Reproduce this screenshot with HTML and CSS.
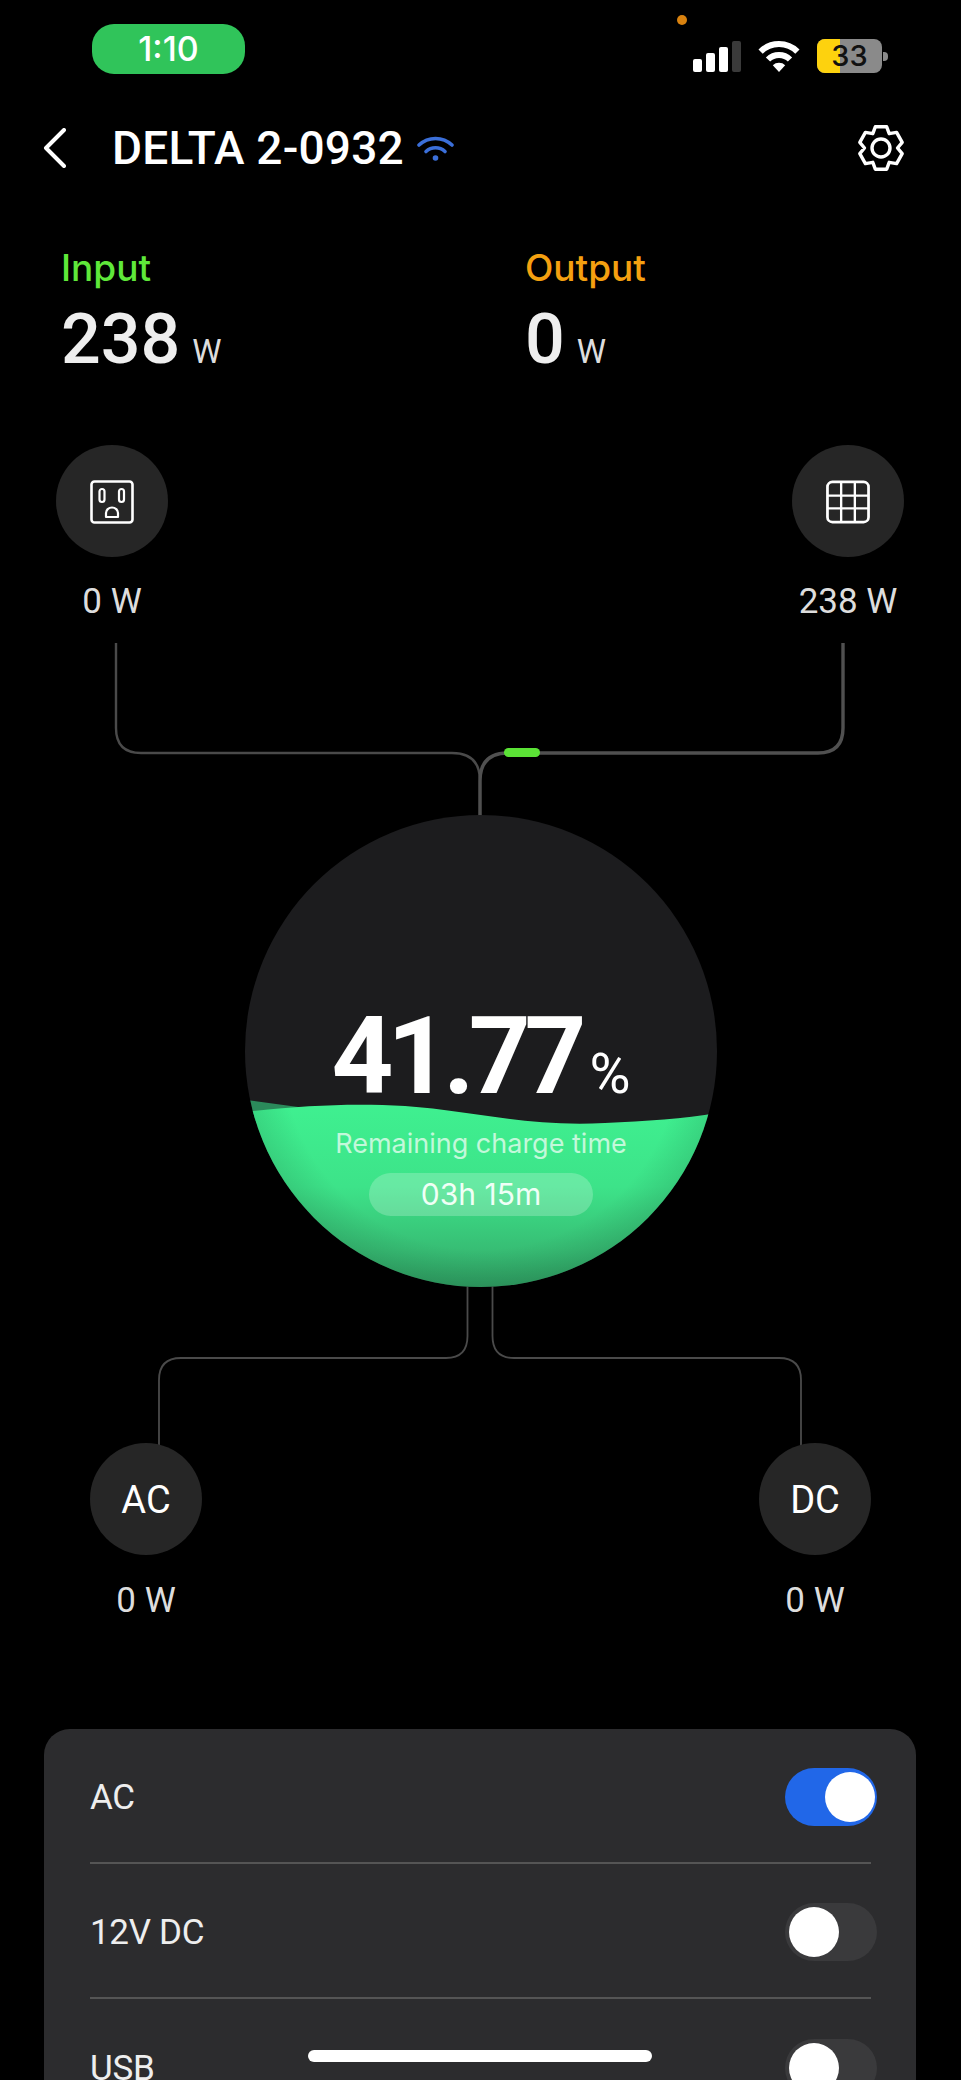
FILE: index.html
```html
<!DOCTYPE html>
<html lang="en">
<head>
  <meta charset="UTF-8">
  <meta name="viewport" content="width=device-width, initial-scale=1.0">
  <title>DELTA 2-0932</title>
  <link rel="stylesheet" href="styles.css">
</head>
<body>
  <div class="status">
    <div class="time-pill">1:10</div>
    <span class="privacy-dot"></span>
    <div class="status-icons">
      <div class="signal">
        <span class="bar bar-1"></span>
        <span class="bar bar-2"></span>
        <span class="bar bar-3"></span>
        <span class="bar bar-4"></span>
      </div>
      <svg class="wifi" viewBox="0 0 44 32">
        <path d="M3.6 11.6A26 26 0 0 1 40.4 11.6" fill="none" stroke="#fff" stroke-width="6"/>
        <path d="M11 19.5A15.5 15.5 0 0 1 33 19.5" fill="none" stroke="#fff" stroke-width="6"/>
        <path d="M22 32L15.8 25.2A9 9 0 0 1 28.2 25.2Z" fill="#fff"/>
      </svg>
      <div class="battery">
        <div class="battery-body"><span class="battery-fill"></span><span class="battery-num">33</span></div>
        <span class="battery-nub"></span>
      </div>
    </div>
  </div>

  <div class="header">
    <svg class="back" viewBox="0 0 23 40">
      <path d="M21 2L3 20L21 38" fill="none" stroke="#fff" stroke-width="4" stroke-linecap="round" stroke-linejoin="round"/>
    </svg>
    <h1>DELTA 2-0932</h1>
    <svg class="link-wifi" viewBox="0 0 37 25">
      <path d="M2 9A24 24 0 0 1 35 9" fill="none" stroke="#3b6fd9" stroke-width="3.6" stroke-linecap="round"/>
      <path d="M9 15.5A14 14 0 0 1 28 15.5" fill="none" stroke="#3b6fd9" stroke-width="3.6" stroke-linecap="round"/>
      <circle cx="18.5" cy="22" r="2.8" fill="#3b6fd9"/>
    </svg>
    <svg class="gear" viewBox="0 0 48 48">
      <path d="M18.3 2.8L29.7 2.8L32.2 9.7L39.6 8.4L45.2 18.3L40.5 24L45.2 29.7L39.6 39.6L32.2 38.3L29.7 45.2L18.3 45.2L15.8 38.3L8.4 39.6L2.8 29.7L7.5 24L2.8 18.3L8.4 8.4L15.8 9.7Z" fill="none" stroke="#fff" stroke-width="3.4" stroke-linejoin="round"/>
      <circle cx="24" cy="24" r="9" fill="none" stroke="#fff" stroke-width="3.4"/>
    </svg>
  </div>

  <div class="stats">
    <div class="stat">
      <div class="stat-label input">Input</div>
      <div class="stat-value">238<span class="unit">W</span></div>
    </div>
    <div class="stat">
      <div class="stat-label output">Output</div>
      <div class="stat-value">0<span class="unit">W</span></div>
    </div>
  </div>

  <div class="diagram">
    <svg class="wires" viewBox="0 0 961 1289">
      <path class="wire" d="M116 203V288Q116 313 141 313H452Q480 313 480 341V376"/>
      <path class="wire wire-thick" d="M843 203V288Q843 313 818 313H508Q480 313 480 341V376"/>
      <rect x="504" y="308" width="36" height="9" rx="4.5" fill="#5be336"/>
      <path class="wire wire-thin" d="M467.5 846V896Q467.5 918 446 918H181Q159 918 159 940V1010"/>
      <path class="wire wire-thin" d="M492.5 846V896Q492.5 918 514 918H779Q801 918 801 940V1010"/>
    </svg>

    <div class="node node-outlet">
      <svg class="node-icon" viewBox="0 0 44 44">
        <rect x="1.5" y="1.5" width="41" height="41" rx="3" fill="none" stroke="#fff" stroke-width="2.6"/>
        <rect x="9.5" y="9" width="5" height="13" rx="2.5" fill="none" stroke="#fff" stroke-width="2.2"/>
        <rect x="29" y="9" width="5" height="13" rx="2.5" fill="none" stroke="#fff" stroke-width="2.2"/>
        <path d="M16 37V33A6 5.5 0 0 1 28 33V37Z" fill="none" stroke="#fff" stroke-width="2.2" stroke-linejoin="round"/>
      </svg>
    </div>
    <div class="node-label label-outlet">0 W</div>

    <div class="node node-solar">
      <svg class="node-icon" viewBox="0 0 45 44">
        <rect x="1.5" y="1.5" width="42" height="41" rx="5" fill="none" stroke="#fff" stroke-width="2.8"/>
        <path d="M15.5 2V42M29.5 2V42M2 15.5H43M2 28.5H43" fill="none" stroke="#fff" stroke-width="2.4"/>
      </svg>
    </div>
    <div class="node-label label-solar">238 W</div>

    <div class="battery-ball">
      <svg class="water" viewBox="0 0 472 472">
        <defs>
          <linearGradient id="water-fade" x1="0" y1="0" x2="0" y2="1">
            <stop offset="0" stop-color="#3ff090"/>
            <stop offset="0.45" stop-color="#3de389"/>
            <stop offset="0.8" stop-color="#37bd74"/>
            <stop offset="1" stop-color="#2fa063"/>
          </linearGradient>
          <radialGradient id="water-edge" cx="236" cy="236" r="236" gradientUnits="userSpaceOnUse">
            <stop offset="0.84" stop-color="#000" stop-opacity="0"/>
            <stop offset="1" stop-color="#000" stop-opacity="0.1"/>
          </radialGradient>
        </defs>
        <path d="M0 285C30 288 60 294 90 296L0 310Z" fill="#2b8a5b"/>
        <path d="M0 297C60 290 110 288 160 291C230 296 280 312 360 308C400 306 440 304 472 298V472H0Z" fill="url(#water-fade)"/>
        <path d="M0 297C60 290 110 288 160 291C230 296 280 312 360 308C400 306 440 304 472 298V472H0Z" fill="url(#water-edge)"/>
      </svg>
      <div class="percent">41.77<span class="percent-sign">%</span></div>
      <div class="remain">Remaining charge time</div>
      <div class="remain-pill">03h 15m</div>
    </div>

    <div class="node node-ac">AC</div>
    <div class="node-label label-ac">0 W</div>
    <div class="node node-dc">DC</div>
    <div class="node-label label-dc">0 W</div>
  </div>

  <div class="card">
    <div class="row">
      <span>AC</span>
      <div class="toggle on"><span class="knob"></span></div>
    </div>
    <div class="row">
      <span>12V DC</span>
      <div class="toggle"><span class="knob"></span></div>
    </div>
    <div class="row">
      <span>USB</span>
      <div class="toggle"><span class="knob"></span></div>
    </div>
  </div>

  <div class="home-bar"></div>
</body>
</html>
```

FILE: styles.css
```css
* {
  box-sizing: border-box;
  margin: 0;
  padding: 0;
}

body {
  position: relative;
  width: 961px;
  height: 2080px;
  overflow: hidden;
  background-color: #000;
  color: #fff;
  font-family: Roboto, "Liberation Sans", sans-serif;
}

/* status bar */
.status {
  display: flex;
  align-items: flex-start;
  height: 124px;
  padding: 24px 73px 0 92px;
}

.time-pill {
  width: 153px;
  height: 50px;
  border-radius: 22px;
  background-color: #30c45a;
  font-family: Inter, sans-serif;
  font-size: 34px;
  font-weight: 500;
  line-height: 50px;
  text-align: center;
}

.privacy-dot {
  position: absolute;
  left: 677px;
  top: 15px;
  width: 10px;
  height: 10px;
  border-radius: 50%;
  background-color: #d9820f;
}

.status-icons {
  display: flex;
  align-items: center;
  gap: 16px;
  margin-left: auto;
  margin-top: 15px;
}

.signal {
  display: flex;
  align-items: flex-end;
  gap: 4px;
  height: 31px;
}

.bar {
  width: 9px;
  border-radius: 2px;
  background-color: #fff;
}

.bar-1 { height: 13px; }
.bar-2 { height: 19px; }
.bar-3 { height: 25px; }
.bar-4 { height: 31px; background-color: #3a3a3a; }

.wifi {
  width: 44px;
  height: 32px;
}

.battery {
  display: flex;
  align-items: center;
  gap: 1px;
}

.battery-body {
  position: relative;
  width: 65px;
  height: 34px;
  border-radius: 8px;
  overflow: hidden;
  background-color: #8a8a8a;
  font-family: Inter, sans-serif;
  font-size: 29px;
  font-weight: 500;
  line-height: 34px;
  text-align: center;
  color: #111;
}

.battery-fill {
  position: absolute;
  left: 0;
  top: 0;
  width: 23px;
  height: 100%;
  background-color: #fdd20e;
}

.battery-num {
  position: relative;
}

.battery-nub {
  width: 5px;
  height: 9px;
  border-radius: 0 4px 4px 0;
  background-color: #8a8a8a;
}

/* title row */
.header {
  display: flex;
  align-items: center;
  height: 48px;
  padding: 0 56px 0 43px;
}

.back {
  width: 23px;
  height: 40px;
  margin-right: 46px;
}

h1 {
  font-size: 46px;
  font-weight: 500;
  letter-spacing: 0.2px;
}

.link-wifi {
  width: 37px;
  height: 25px;
  margin-left: 13px;
}

.gear {
  width: 48px;
  height: 48px;
  margin-left: auto;
}

/* input / output */
.stats {
  display: grid;
  grid-template-columns: 464px 1fr;
  height: 268px;
  padding: 72px 0 0 61px;
}

.stat-label {
  font-family: Inter, sans-serif;
  font-size: 37px;
  font-weight: 500;
  line-height: 48px;
}

.input { color: #5fe83a; }
.output { color: #f5a010; }

.stat-value {
  margin-top: 9px;
  font-size: 70px;
  font-weight: 500;
  line-height: 76px;
  color: #eee;
}

.unit {
  margin-left: 12px;
  font-size: 33px;
  font-weight: 400;
  color: #ddd;
}

/* power flow diagram */
.diagram {
  position: relative;
  height: 1289px;
}

.wires {
  position: absolute;
  left: 0;
  top: 0;
  width: 961px;
  height: 1289px;
}

.wire {
  fill: none;
  stroke: #4a4a4a;
  stroke-width: 2.4;
}

.wire-thick {
  stroke: #505050;
  stroke-width: 3.4;
}

.wire-thin {
  stroke-width: 1.8;
}

.node {
  position: absolute;
  display: flex;
  align-items: center;
  justify-content: center;
  width: 112px;
  height: 112px;
  border-radius: 50%;
  background-color: #262626;
  padding-top: 2px;
  font-size: 38px;
}

.node-outlet { left: 56px; top: 5px; }
.node-solar { left: 792px; top: 5px; }
.node-ac { left: 90px; top: 1003px; }
.node-dc { left: 759px; top: 1003px; }

.node-icon {
  width: 44px;
  height: 44px;
}

.node-label {
  position: absolute;
  width: 160px;
  font-size: 35px;
  line-height: 40px;
  text-align: center;
  color: #ddd;
}

.label-outlet { left: 32px; top: 142px; }
.label-solar { left: 768px; top: 142px; }
.label-ac { left: 66px; top: 1141px; }
.label-dc { left: 735px; top: 1141px; }

.battery-ball {
  position: absolute;
  left: 245px;
  top: 375px;
  display: flex;
  flex-direction: column;
  align-items: center;
  width: 472px;
  height: 472px;
  border-radius: 50%;
  overflow: hidden;
  background-color: #1c1c1e;
}

.water {
  position: absolute;
  left: 0;
  top: 0;
  width: 472px;
  height: 472px;
}

.percent {
  position: relative;
  margin-top: 176px;
  font-size: 108px;
  font-weight: 700;
  line-height: 130px;
  letter-spacing: -6px;
}

.percent-sign {
  margin-left: 9px;
  font-size: 56px;
  font-weight: 400;
  letter-spacing: 0;
}

.remain {
  position: relative;
  margin-top: -13px;
  font-family: Inter, sans-serif;
  font-size: 27px;
  line-height: 36px;
  color: #c3f8da;
}

.remain-pill {
  position: relative;
  width: 224px;
  height: 43px;
  margin-top: 11px;
  border-radius: 22px;
  background-color: rgba(255, 255, 255, 0.22);
  font-family: Inter, sans-serif;
  font-size: 30px;
  line-height: 43px;
  text-align: center;
  color: #f0fff6;
}

/* switches card */
.card {
  height: 400px;
  margin: 0 45px 0 44px;
  padding: 0 45px 0 46px;
  border-radius: 26px;
  background-color: #2c2c2e;
}

.row {
  display: flex;
  align-items: center;
  justify-content: space-between;
  height: 135px;
  padding-top: 3px;
  border-bottom: 2px solid #555;
  font-size: 35px;
  letter-spacing: -0.3px;
  color: #eee;
}

.row:last-child {
  border-bottom: none;
}

.toggle {
  display: flex;
  align-items: center;
  width: 92px;
  height: 58px;
  margin-right: -6px;
  padding: 0 2px 0 4px;
  border-radius: 29px;
  background-color: #3a3a3c;
}

.toggle.on {
  justify-content: flex-end;
  background-color: #2167e8;
}

.knob {
  width: 50px;
  height: 50px;
  border-radius: 50%;
  background-color: #fff;
}

.home-bar {
  position: absolute;
  left: 308px;
  top: 2050px;
  width: 344px;
  height: 12px;
  border-radius: 6px;
  background-color: #fff;
}
```
